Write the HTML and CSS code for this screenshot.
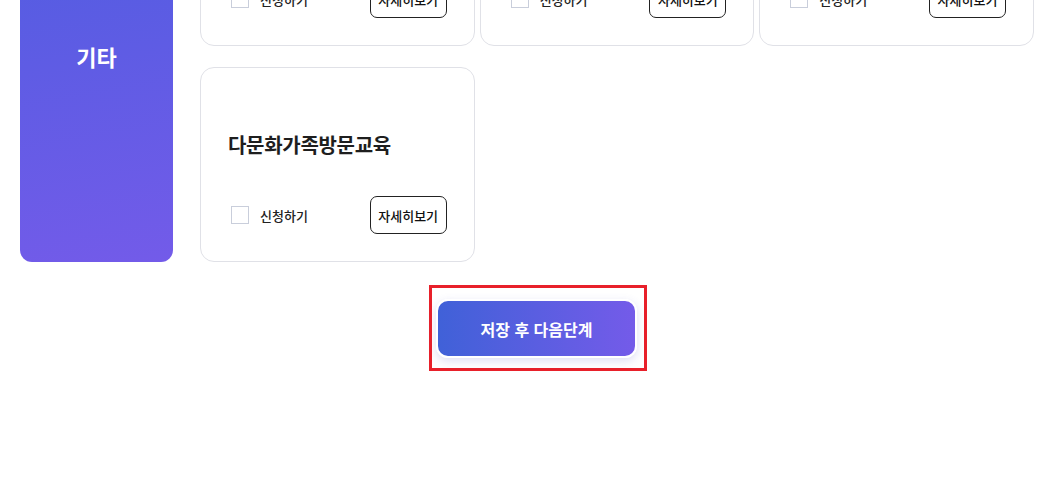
FILE: index.html
```html
<!DOCTYPE html>
<html lang="ko">
<head>
  <meta charset="UTF-8" />
  <meta name="viewport" content="width=device-width, initial-scale=1.0" />
  <title>교육 신청</title>
  <link rel="stylesheet" href="styles.css">
</head>
<body>
  <div class="container">
    <div class="category">
      <div class="category-name">기타</div>
      <div class="programs">
        <div class="card">
          <div class="card-title">방과후돌봄교실</div>
          <div class="card-foot">
            <label class="apply"><span class="check"></span>신청하기</label>
            <button class="detail">자세히보기</button>
          </div>
        </div>
        <div class="card">
          <div class="card-title">찾아가는부모교육</div>
          <div class="card-foot">
            <label class="apply"><span class="check"></span>신청하기</label>
            <button class="detail">자세히보기</button>
          </div>
        </div>
        <div class="card">
          <div class="card-title">가족상담지원</div>
          <div class="card-foot">
            <label class="apply"><span class="check"></span>신청하기</label>
            <button class="detail">자세히보기</button>
          </div>
        </div>
        <div class="card">
          <div class="card-title">다문화가족방문교육</div>
          <div class="card-foot">
            <label class="apply"><span class="check"></span>신청하기</label>
            <button class="detail">자세히보기</button>
          </div>
        </div>
      </div>
    </div>
    <div class="actions">
      <div class="highlight">
        <button class="next">저장 후 다음단계</button>
      </div>
    </div>
  </div>
</body>
</html>
```

FILE: styles.css
```css
body {
  margin: 0;
  font-family: "Noto Sans CJK KR", "Noto Sans", sans-serif;
  background: #ffffff;
  color: #222;
}
.container {
  padding: 0 17px 0 20px;
}
.category {
  display: flex;
  gap: 27px;
  margin-top: -149px;
}
.category-name {
  width: 153px;
  flex-shrink: 0;
  border-radius: 12px;
  background: linear-gradient(170deg, #4a5ddf 0%, #735be9 100%);
  color: #fff;
  font-size: 22px;
  font-weight: 700;
  display: flex;
  align-items: center;
  justify-content: center;
  padding-bottom: 2px;
}
.programs {
  flex: 1;
  display: grid;
  grid-template-columns: 1fr 1fr 1fr;
  column-gap: 5px;
  row-gap: 21px;
}
.card {
  height: 195px;
  box-sizing: border-box;
  border: 1px solid #e0e1e7;
  border-radius: 14px;
  padding: 27px 27px 27px;
  display: flex;
  flex-direction: column;
}
.card-title {
  flex: 1;
  display: flex;
  align-items: center;
  font-size: 20px;
  font-weight: 700;
  color: #1e1e1e;
  letter-spacing: -0.3px;
  padding-bottom: 2px;
}
.card-foot {
  display: flex;
  align-items: center;
  justify-content: space-between;
}
.apply {
  display: flex;
  align-items: center;
  gap: 11px;
  font-size: 13px;
  font-weight: 500;
  padding-left: 3px;
}
.check {
  width: 16px;
  height: 16px;
  border: 1px solid #c9cedb;
  background: #fff;
}
.detail {
  width: 77px;
  height: 38px;
  border: 1px solid #222;
  border-radius: 7px;
  background: #fff;
  font-family: inherit;
  font-size: 13px;
  font-weight: 500;
  color: #111;
  padding: 0;
  cursor: pointer;
}
.actions {
  display: flex;
  justify-content: center;
  padding-left: 22px;
  margin-top: 23px;
}
.highlight {
  border: 3px solid #e8202a;
  padding: 11px 7px 10px 4px;
}
.next {
  width: 201px;
  height: 59px;
  border: 2px solid #fff;
  border-radius: 12px;
  background: linear-gradient(90deg, #4061d8 0%, #745be9 100%);
  box-shadow: 0 3px 10px rgba(90, 90, 200, 0.2);
  color: #fff;
  font-family: inherit;
  font-size: 16px;
  font-weight: 700;
  cursor: pointer;
}
```
